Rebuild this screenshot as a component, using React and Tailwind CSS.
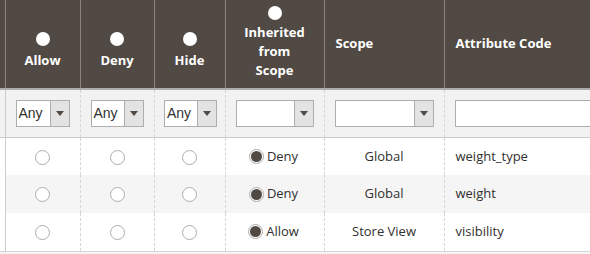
import React from "react";

const Radio = ({ checked, header }) => {
  if (header) {
    return <span className="inline-block w-[14px] h-[14px] rounded-full bg-white" />;
  }
  return (
    <span className="inline-flex items-center justify-center w-[15px] h-[15px] rounded-full border border-[#adadad] bg-white align-middle">
      {checked && <span className="block w-[11px] h-[11px] rounded-full bg-[#514943]" />}
    </span>
  );
};

const Select = ({ w, value }) => (
  <div className={`flex h-[27px] border border-[#adadad] bg-white ${w}`}>
    <div className="flex-1 flex items-center pl-[2px] text-[14px] text-[#303030]" style={{ fontFamily: "'Liberation Sans', Arial, sans-serif" }}>{value}</div>
    <div className="w-[19px] border-l border-[#adadad] bg-[#e3e3e3] flex items-center justify-center">
      <svg width="8" height="5" viewBox="0 0 8 5"><path d="M0 0H8L4 5Z" fill="#514943" /></svg>
    </div>
  </div>
);

const rows = [
  { inh: "Deny", scope: "Global", code: "weight_type" },
  { inh: "Deny", scope: "Global", code: "weight" },
  { inh: "Allow", scope: "Store View", code: "visibility" },
];

export default function App() {
  const th = "bg-[#514943] text-white font-bold text-[13px] border-l border-[#8a837f] align-middle p-0";
  const fd = "border-l border-dashed border-[#d6d6d6] p-0 align-middle";
  return (
    <div className="w-[590px] h-[254px] overflow-hidden bg-[#f5f5f5]" style={{ fontFamily: "'Open Sans', sans-serif" }}>
      <table className="border-collapse table-fixed w-[600px] text-[#303030]">
        <colgroup>
          <col className="w-[5px]" />
          <col className="w-[75px]" />
          <col className="w-[74px]" />
          <col className="w-[71px]" />
          <col className="w-[99px]" />
          <col className="w-[120px]" />
          <col />
        </colgroup>
        <thead>
          <tr className="h-[89px]">
            <th className="bg-[#514943] p-0" />
            {["Allow", "Deny", "Hide"].map((l) => (
              <th key={l} className={th}>
                <div className="flex flex-col items-center pt-[13px]">
                  <Radio header />
                  <div className="mt-[5px] leading-[18px]">{l}</div>
                </div>
              </th>
            ))}
            <th className={th}>
              <div className="flex flex-col items-center pb-[3px]">
                <Radio header />
                <div className="mt-[3px] leading-[19px] text-center">Inherited<br />from<br />Scope</div>
              </div>
            </th>
            <th className={`${th} text-left pl-[11px]`}>Scope</th>
            <th className={`${th} text-left pl-[11px]`}>Attribute Code</th>
          </tr>
        </thead>
        <tbody>
          <tr className="h-[48px] bg-[#f2f2f2] border-t-2 border-[#adadad] border-b border-b-[#cccccc]">
            <td className="p-0 border-r border-[#cccccc]" />
            <td className="p-0 align-middle"><div className="flex justify-center"><Select w="w-[54px]" value="Any" /></div></td>
            <td className={fd}><div className="flex justify-center"><Select w="w-[53px]" value="Any" /></div></td>
            <td className={fd}><div className="flex justify-center pl-[2px]"><Select w="w-[53px]" value="Any" /></div></td>
            <td className={fd}><div className="flex justify-center"><Select w="w-[78px]" value="" /></div></td>
            <td className={fd}><div className="pl-[10px]"><Select w="w-[99px]" value="" /></div></td>
            <td className={fd}><div className="pl-[10px]"><div className="h-[27px] w-[160px] border border-[#adadad] bg-white" /></div></td>
          </tr>
          {rows.map((r, i) => (
            <tr key={i} className={`h-[38px] text-[13px] ${i === 1 ? "bg-[#f5f5f5]" : "bg-white"}`}>
              <td className="p-0 bg-white border-r border-[#cccccc]" />
              <td className="p-0 text-center"><Radio /></td>
              <td className="border-l border-dashed border-[#d6d6d6] p-0 text-center"><Radio /></td>
              <td className="border-l border-dashed border-[#d6d6d6] p-0 text-center"><Radio /></td>
              <td className="border-l border-dashed border-[#d6d6d6] p-0">
                <div className="flex items-center justify-center gap-[3px] pr-[2px]">
                  <Radio checked />
                  <span>{r.inh}</span>
                </div>
              </td>
              <td className="border-l border-dashed border-[#d6d6d6] p-0 text-center">{r.scope}</td>
              <td className="border-l border-dashed border-[#d6d6d6] p-0 pl-[11px]">{r.code}</td>
            </tr>
          ))}
          <tr className="h-[1px] border-t border-[#d6d6d6]"><td colSpan={7} className="p-0" /></tr>
        </tbody>
      </table>
    </div>
  );
}
